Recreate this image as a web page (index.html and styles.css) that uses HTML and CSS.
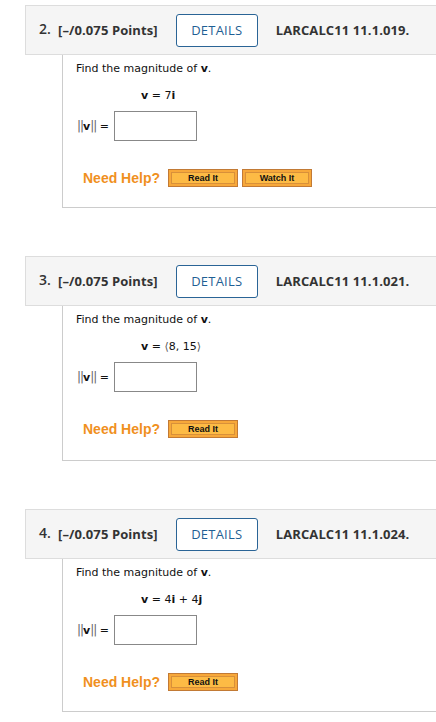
FILE: index.html
```html
<!DOCTYPE html>
<html lang="en">
<head>
    <meta charset="UTF-8">
    <meta name="viewport" content="width=device-width, initial-scale=1.0">
    <title>Assignment Questions</title>
    <link rel="stylesheet" href="styles.css">
</head>
<body>
    <div class="question">
        <div class="q-header">
            <span class="q-num">2.</span>
            <span class="q-points">[&ndash;/0.075 Points]</span>
            <button class="details-btn">DETAILS</button>
            <span class="q-ref">LARCALC11 11.1.019.</span>
        </div>
        <div class="q-body">
            <p class="prompt">Find the magnitude of <b>v</b>.</p>
            <p class="equation"><b>v</b> = 7<b>i</b></p>
            <div class="answer">
                <span class="norm"><span class="bar">||</span><b>v</b><span class="bar">||</span> =</span>
                <input type="text" class="answer-box">
            </div>
            <div class="help">
                <span class="help-label">Need Help?</span>
                <button class="help-btn">Read It</button>
                <button class="help-btn">Watch It</button>
            </div>
        </div>
    </div>

    <div class="question">
        <div class="q-header">
            <span class="q-num">3.</span>
            <span class="q-points">[&ndash;/0.075 Points]</span>
            <button class="details-btn">DETAILS</button>
            <span class="q-ref">LARCALC11 11.1.021.</span>
        </div>
        <div class="q-body">
            <p class="prompt">Find the magnitude of <b>v</b>.</p>
            <p class="equation"><b>v</b> = <span class="angle">&#10216;</span>8, 15<span class="angle">&#10217;</span></p>
            <div class="answer">
                <span class="norm"><span class="bar">||</span><b>v</b><span class="bar">||</span> =</span>
                <input type="text" class="answer-box">
            </div>
            <div class="help help-tall">
                <span class="help-label">Need Help?</span>
                <button class="help-btn">Read It</button>
            </div>
        </div>
    </div>

    <div class="question">
        <div class="q-header">
            <span class="q-num">4.</span>
            <span class="q-points">[&ndash;/0.075 Points]</span>
            <button class="details-btn">DETAILS</button>
            <span class="q-ref">LARCALC11 11.1.024.</span>
        </div>
        <div class="q-body">
            <p class="prompt">Find the magnitude of <b>v</b>.</p>
            <p class="equation"><b>v</b> = 4<b>i</b> + 4<b>j</b></p>
            <div class="answer">
                <span class="norm"><span class="bar">||</span><b>v</b><span class="bar">||</span> =</span>
                <input type="text" class="answer-box">
            </div>
            <div class="help">
                <span class="help-label">Need Help?</span>
                <button class="help-btn">Read It</button>
            </div>
        </div>
    </div>
</body>
</html>
```

FILE: styles.css
```css
body {
    margin: 0;
    padding-top: 5px;
    background-color: #FFFFFF;
    color: #222222;
    font-family: "Open Sans", "DejaVu Sans", sans-serif;
    overflow: hidden;
}

.question {
    margin-left: 25px;
    margin-bottom: 48px;
}

.q-header {
    box-sizing: border-box;
    height: 50px;
    display: flex;
    align-items: center;
    padding-left: 13px;
    background-color: #F5F5F5;
    border: 1px solid #DDDDDD;
    border-right: none;
    color: #333333;
}

.q-num {
    font-size: 14px;
    font-weight: 600;
    margin-top: -3px;
    width: 19px;
}

.q-points {
    font-size: 13px;
    font-weight: 700;
    letter-spacing: 0.1px;
}

.details-btn {
    box-sizing: border-box;
    width: 82px;
    height: 33px;
    margin-left: 18px;
    margin-right: 18px;
    background-color: #FFFFFF;
    border: 1px solid #2A6496;
    border-radius: 3px;
    color: #1F5F94;
    font-family: "Open Sans", sans-serif;
    font-size: 13px;
    letter-spacing: 0.2px;
    padding: 0;
}

.q-ref {
    font-size: 13px;
    font-weight: 700;
    letter-spacing: 0.1px;
}

.q-body {
    margin-left: 37px;
    padding: 7px 0 20px 13px;
    border-left: 1px solid #CCCCCC;
    border-bottom: 1px solid #CCCCCC;
    font-family: Verdana, "DejaVu Sans", sans-serif;
    font-size: 11px;
    color: #111111;
}

.prompt {
    margin: 0;
    line-height: 14px;
}

.equation {
    margin: 13px 0 0 65px;
    line-height: 14px;
}

.angle {
    color: #555555;
}

.answer {
    display: flex;
    align-items: center;
    gap: 5px;
    margin-top: 8px;
    padding-left: 1px;
}

.norm {
    font-size: 11px;
}

.bar {
    color: #666666;
    font-size: 12px;
    letter-spacing: -1px;
}

.answer-box {
    box-sizing: border-box;
    width: 83px;
    height: 30px;
    margin: 0;
    border: 1px solid #888888;
    border-radius: 0;
}

.help {
    display: flex;
    align-items: center;
    margin-top: 28px;
    padding-left: 7px;
}

.help-tall {
    margin-bottom: 2px;
}

.help-label {
    font-family: "Liberation Sans", Arial, sans-serif;
    font-size: 14px;
    font-weight: 700;
    color: #F0901E;
    margin-right: 8px;
}

.help-btn {
    box-sizing: border-box;
    width: 70px;
    height: 18px;
    margin-right: 4px;
    padding: 0;
    background-color: #FDBB45;
    border: 1px solid #C27A35;
    box-shadow: inset 0 0 0 2px #F7A83A, inset 0 0 0 3px #D8903A;
    font-family: "Liberation Sans", Arial, sans-serif;
    font-size: 9px;
    font-weight: 700;
    color: #111111;
}
```
